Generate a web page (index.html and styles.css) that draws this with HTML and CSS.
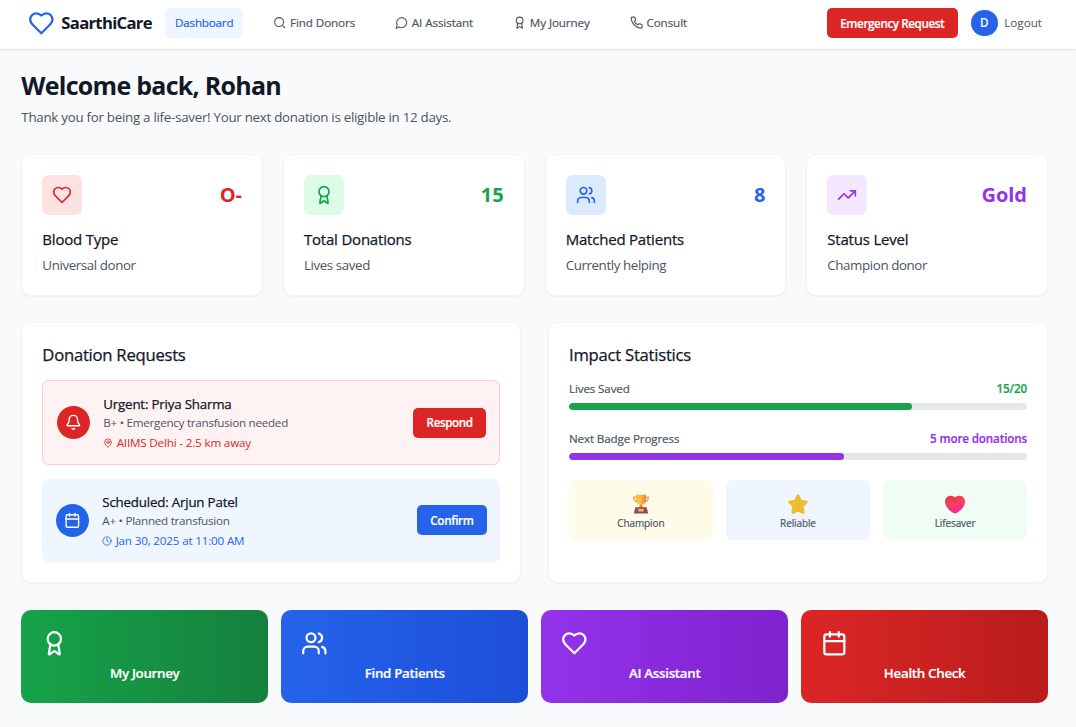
FILE: index.html
```html
<!DOCTYPE html>
<html lang="en">
<head>
    <meta charset="UTF-8">
    <meta name="viewport" content="width=device-width, initial-scale=1.0">
    <title>SaarthiCare</title>
    <link rel="stylesheet" href="styles.css">
</head>
<body>
    <!-- Shared icons -->
    <svg class="sprite" aria-hidden="true">
        <symbol id="heart" viewBox="0 0 24 24"><path d="M19 14c1.49-1.46 3-3.21 3-5.5A5.5 5.5 0 0 0 16.5 3c-1.76 0-3 .5-4.5 2-1.5-1.5-2.74-2-4.5-2A5.5 5.5 0 0 0 2 8.5c0 2.3 1.5 4.05 3 5.5l7 7Z"/></symbol>
        <symbol id="search" viewBox="0 0 24 24"><circle cx="11" cy="11" r="8"/><path d="m21 21-4.3-4.3"/></symbol>
        <symbol id="chat" viewBox="0 0 24 24"><path d="M7.9 20A9 9 0 1 0 4 16.1L2 22Z"/></symbol>
        <symbol id="award" viewBox="0 0 24 24"><path d="m15.477 12.89 1.515 8.526a.5.5 0 0 1-.81.47l-3.58-2.687a1 1 0 0 0-1.197 0l-3.586 2.686a.5.5 0 0 1-.81-.469l1.514-8.526"/><circle cx="12" cy="8" r="6"/></symbol>
        <symbol id="phone" viewBox="0 0 24 24"><path d="M22 16.92v3a2 2 0 0 1-2.18 2 19.79 19.79 0 0 1-8.63-3.07 19.5 19.5 0 0 1-6-6 19.79 19.79 0 0 1-3.07-8.67A2 2 0 0 1 4.11 2h3a2 2 0 0 1 2 1.72 12.84 12.84 0 0 0 .7 2.81 2 2 0 0 1-.45 2.11L8.09 9.91a16 16 0 0 0 6 6l1.27-1.27a2 2 0 0 1 2.11-.45 12.84 12.84 0 0 0 2.81.7A2 2 0 0 1 22 16.92z"/></symbol>
        <symbol id="users" viewBox="0 0 24 24"><path d="M16 21v-2a4 4 0 0 0-4-4H6a4 4 0 0 0-4 4v2"/><circle cx="9" cy="7" r="4"/><path d="M22 21v-2a4 4 0 0 0-3-3.87"/><path d="M16 3.13a4 4 0 0 1 0 7.75"/></symbol>
        <symbol id="trend" viewBox="0 0 24 24"><path d="M22 7 13.5 15.5 8.5 10.5 2 17"/><path d="M16 7h6v6"/></symbol>
        <symbol id="bell" viewBox="0 0 24 24"><path d="M10.268 21a2 2 0 0 0 3.464 0"/><path d="M3.262 15.326A1 1 0 0 0 4 17h16a1 1 0 0 0 .74-1.673C19.41 13.956 18 12.499 18 8A6 6 0 0 0 6 8c0 4.499-1.411 5.956-2.738 7.326"/></symbol>
        <symbol id="pin" viewBox="0 0 24 24"><path d="M20 10c0 4.993-5.539 10.193-7.399 11.799a1 1 0 0 1-1.202 0C9.539 20.193 4 14.993 4 10a8 8 0 0 1 16 0"/><circle cx="12" cy="10" r="3"/></symbol>
        <symbol id="calendar" viewBox="0 0 24 24"><path d="M8 2v4M16 2v4M3 10h18"/><rect x="3" y="4" width="18" height="18" rx="2"/></symbol>
        <symbol id="clock" viewBox="0 0 24 24"><circle cx="12" cy="12" r="10"/><path d="M12 6v6l4 2"/></symbol>
    </svg>

    <header class="header">
        <a class="brand" href="#">
            <svg class="icon icon-lg"><use href="#heart"/></svg>
            <span>SaarthiCare</span>
        </a>
        <nav class="nav">
            <a class="nav-link active" href="#">Dashboard</a>
            <a class="nav-link" href="#"><svg class="icon icon-sm"><use href="#search"/></svg>Find Donors</a>
            <a class="nav-link" href="#"><svg class="icon icon-sm"><use href="#chat"/></svg>AI Assistant</a>
            <a class="nav-link" href="#"><svg class="icon icon-sm"><use href="#award"/></svg>My Journey</a>
            <a class="nav-link" href="#"><svg class="icon icon-sm"><use href="#phone"/></svg>Consult</a>
        </nav>
        <div class="account">
            <button class="btn btn-red">Emergency Request</button>
            <div class="avatar">D</div>
            <a class="logout" href="#">Logout</a>
        </div>
    </header>

    <main class="main">
        <h1>Welcome back, Rohan</h1>
        <p class="subtitle">Thank you for being a life-saver! Your next donation is eligible in 12 days.</p>

        <!-- Stats -->
        <section class="stats">
            <div class="card red">
                <div class="stat-top">
                    <div class="stat-icon"><svg class="icon"><use href="#heart"/></svg></div>
                    <span class="stat-value">O-</span>
                </div>
                <h3>Blood Type</h3>
                <p>Universal donor</p>
            </div>
            <div class="card green">
                <div class="stat-top">
                    <div class="stat-icon"><svg class="icon"><use href="#award"/></svg></div>
                    <span class="stat-value">15</span>
                </div>
                <h3>Total Donations</h3>
                <p>Lives saved</p>
            </div>
            <div class="card blue">
                <div class="stat-top">
                    <div class="stat-icon"><svg class="icon"><use href="#users"/></svg></div>
                    <span class="stat-value">8</span>
                </div>
                <h3>Matched Patients</h3>
                <p>Currently helping</p>
            </div>
            <div class="card purple">
                <div class="stat-top">
                    <div class="stat-icon"><svg class="icon"><use href="#trend"/></svg></div>
                    <span class="stat-value">Gold</span>
                </div>
                <h3>Status Level</h3>
                <p>Champion donor</p>
            </div>
        </section>

        <section class="panels">
            <!-- Donation requests -->
            <div class="card">
                <h2>Donation Requests</h2>
                <div class="request urgent">
                    <div class="request-icon"><svg class="icon"><use href="#bell"/></svg></div>
                    <div class="request-text">
                        <h4>Urgent: Priya Sharma</h4>
                        <p>B+ • Emergency transfusion needed</p>
                        <p class="request-meta"><svg class="icon icon-xs"><use href="#pin"/></svg>AIIMS Delhi - 2.5 km away</p>
                    </div>
                    <button class="btn btn-red">Respond</button>
                </div>
                <div class="request scheduled">
                    <div class="request-icon"><svg class="icon"><use href="#calendar"/></svg></div>
                    <div class="request-text">
                        <h4>Scheduled: Arjun Patel</h4>
                        <p>A+ • Planned transfusion</p>
                        <p class="request-meta"><svg class="icon icon-xs"><use href="#clock"/></svg>Jan 30, 2025 at 11:00 AM</p>
                    </div>
                    <button class="btn btn-blue">Confirm</button>
                </div>
            </div>

            <!-- Impact -->
            <div class="card">
                <h2>Impact Statistics</h2>
                <div class="progress green">
                    <div class="progress-label"><span>Lives Saved</span><b>15/20</b></div>
                    <div class="track"><div class="fill" style="width: 75%"></div></div>
                </div>
                <div class="progress purple">
                    <div class="progress-label"><span>Next Badge Progress</span><b>5 more donations</b></div>
                    <div class="track"><div class="fill" style="width: 60%"></div></div>
                </div>
                <div class="badges">
                    <div class="badge badge-yellow">
                        <svg class="emoji" viewBox="0 0 32 32">
                            <defs><linearGradient id="cup" x2="1"><stop offset="0" stop-color="#f9b53c"/><stop offset=".4" stop-color="#ffc542"/><stop offset="1" stop-color="#ee7c3b"/></linearGradient></defs>
                            <path d="M9 5H4.500q-.8 7 7 8M23 5h4.500q.8 7-7 8" fill="none" stroke="#f49b3c" stroke-width="2.200"/>
                            <path d="M14 15h4l.5 7h-5z" fill="#e8803a"/>
                            <path d="M8 1h16v7c0 6-3 9-8 9s-8-3-8-9z" fill="url(#cup)"/>
                            <path d="M7 21h18l2.500 10h-23z" fill="#8b4860"/>
                            <path d="M8 21h16v3H8z" fill="#a65b68"/>
                            <rect x="11.500" y="24" width="9" height="4" rx="1" fill="#f6b64c"/>
                        </svg>
                        <span>Champion</span>
                    </div>
                    <div class="badge badge-blue">
                        <svg class="emoji" viewBox="0 0 32 32">
                            <defs><linearGradient id="gold" x2="1" y2="1"><stop offset="0" stop-color="#f6cf4a"/><stop offset=".6" stop-color="#e9bb2c"/><stop offset="1" stop-color="#f2d027"/></linearGradient></defs>
                            <path d="M16 3 19.500 11.500l9.500 1.200-6.500 6.600 1.500 10L16 25.200 8 29.300l1.500-10-6.500-6.600L12.500 11.500z" fill="url(#gold)" stroke="#edbd30" stroke-width="5" stroke-linejoin="round"/>
                        </svg>
                        <span>Reliable</span>
                    </div>
                    <div class="badge badge-green">
                        <svg class="emoji" viewBox="0 0 32 32">
                            <defs><linearGradient id="love" x2=".3" y2="1"><stop offset="0" stop-color="#e03a50"/><stop offset=".45" stop-color="#f8404f"/><stop offset="1" stop-color="#f529a0"/></linearGradient></defs>
                            <path d="M16 6C13 1 0 1.500 0 12.500 0 21 9 28 13.500 30.500q2.500 1 5 0C23 28 32 21 32 12.500 32 1.500 19 1 16 6z" fill="url(#love)"/>
                            <path d="M16 6c-1.500 2-1.500 4-.5 6" fill="none" stroke="#c92d4c" stroke-width="1.500"/>
                        </svg>
                        <span>Lifesaver</span>
                    </div>
                </div>
            </div>
        </section>

        <!-- Quick actions -->
        <section class="actions">
            <a class="action action-green" href="#"><svg class="icon icon-lg"><use href="#award"/></svg><span>My Journey</span></a>
            <a class="action action-blue" href="#"><svg class="icon icon-lg"><use href="#users"/></svg><span>Find Patients</span></a>
            <a class="action action-purple" href="#"><svg class="icon icon-lg"><use href="#heart"/></svg><span>AI Assistant</span></a>
            <a class="action action-red" href="#"><svg class="icon icon-lg"><use href="#calendar"/></svg><span>Health Check</span></a>
        </section>
    </main>
</body>
</html>
```

FILE: styles.css
```css
:root {
    --red: #dc2626;
    --green: #16a34a;
    --blue: #2563eb;
    --purple: #9333ea;
    --heading: #111827;
    --text: #4b5563;
}

* {
    box-sizing: border-box;
}

html {
    font-size: 13.333px;
}

body {
    margin: 0;
    height: 100vh;
    overflow: hidden;
    background-color: #f9fafb;
    color: var(--heading);
    font-family: 'Open Sans', 'Noto Sans', sans-serif;
    font-size: 1rem;
    line-height: 1.5;
}

h1, h2, h3, h4, p {
    margin: 0;
}

/* Open Sans has no medium weight, thicken the regular one */
h2, h3, h4 {
    font-weight: 400;
    -webkit-text-stroke: 0.25px currentColor;
}

a {
    color: inherit;
    text-decoration: none;
}

.sprite {
    position: absolute;
    width: 0;
    height: 0;
}

.icon {
    width: 1.5rem;
    height: 1.5rem;
    flex-shrink: 0;
    fill: none;
    stroke: currentColor;
    stroke-width: 2;
    stroke-linecap: round;
    stroke-linejoin: round;
}

.icon-lg {
    width: 2rem;
    height: 2rem;
}

.icon-sm {
    width: 1rem;
    height: 1rem;
}

.icon-xs {
    width: 0.75rem;
    height: 0.75rem;
}

/* Header */
.header {
    display: flex;
    align-items: center;
    height: 50px;
    padding: 0 34px 3px 28px;
    background-color: #fff;
    border-bottom: 1px solid #e5e7eb;
    box-shadow: 0 1px 2px rgba(0, 0, 0, 0.05);
}

.brand {
    display: flex;
    align-items: center;
    gap: 6.667px;
    width: 137px;
    font-size: 1.25rem;
    font-weight: 700;
    line-height: 23.333px;
    letter-spacing: -0.7px;
}

.brand .icon {
    color: var(--blue);
}

.nav {
    display: flex;
    gap: 20px;
}

.nav-link {
    display: flex;
    align-items: center;
    gap: 3.333px;
    height: 30px;
    padding: 0 10px;
    border-radius: 5px;
    color: var(--text);
    font-size: 0.875rem;
    letter-spacing: -0.1px;
    white-space: nowrap;
    -webkit-text-stroke: 0.2px currentColor;
}

.nav-link.active {
    background-color: #eff6ff;
    color: var(--blue);
    letter-spacing: -0.2px;
}

.account {
    display: flex;
    align-items: center;
    margin-left: auto;
}

.btn {
    height: 30px;
    padding: 0 13.333px;
    border: none;
    border-radius: 5px;
    color: #fff;
    font-family: inherit;
    font-size: 0.875rem;
    font-weight: 600;
    letter-spacing: -0.4px;
    white-space: nowrap;
    cursor: pointer;
    -webkit-text-stroke: 0.2px currentColor;
}

.btn-red {
    background-color: var(--red);
}

.btn-blue {
    background-color: var(--blue);
    letter-spacing: -0.3px;
}

.avatar {
    display: flex;
    align-items: center;
    justify-content: center;
    width: 2rem;
    height: 2rem;
    margin: 0 6.667px 0 13.333px;
    border-radius: 50%;
    background-color: var(--blue);
    color: #fff;
    font-size: 0.875rem;
    font-weight: 600;
}

.logout {
    color: var(--text);
    font-size: 0.875rem;
}

/* Main */
.main {
    padding: 20px 28px 0 21.333px;
}

h1 {
    font-size: 1.875rem;
    font-weight: 700;
    line-height: 30px;
    letter-spacing: -0.72px;
}

h2 {
    margin-bottom: 13.333px;
    font-size: 1.25rem;
    line-height: 23.333px;
    letter-spacing: -0.25px;
}

.subtitle {
    margin: 8px 0 25.833px;
    color: var(--text);
    letter-spacing: -0.27px;
}

.card {
    padding: 20px;
    border: 1px solid #f3f4f6;
    border-radius: 10px;
    background-color: #fff;
    box-shadow: 0 1px 2px rgba(0, 0, 0, 0.05);
}

/* Stats */
.stats {
    display: grid;
    grid-template-columns: repeat(4, 1fr);
    gap: 20px;
    margin-bottom: 26.667px;
}

.stats .card {
    padding-bottom: 19px;
}

.stat-top {
    display: flex;
    align-items: center;
    justify-content: space-between;
    margin-bottom: 13.333px;
}

.stat-icon {
    display: flex;
    align-items: center;
    justify-content: center;
    width: 3rem;
    height: 3rem;
    border-radius: 6.667px;
}

.stat-value {
    font-size: 1.5rem;
    font-weight: 700;
}

.stats h3 {
    font-size: 1.125rem;
    line-height: 23.333px;
    letter-spacing: -0.2px;
}

.stats p {
    margin-top: 4.333px;
    color: var(--text);
    letter-spacing: -0.4px;
}

.red .stat-icon {
    background-color: #fee2e2;
}

.green .stat-icon {
    background-color: #dcfce7;
}

.blue .stat-icon {
    background-color: #dbeafe;
}

.purple .stat-icon {
    background-color: #f3e8ff;
}

.red .stat-top {
    color: var(--red);
}

.green .stat-top,
.green b {
    color: var(--green);
}

.blue .stat-top {
    color: var(--blue);
}

.purple .stat-top,
.purple b {
    color: var(--purple);
}

/* Panels */
.panels {
    display: grid;
    grid-template-columns: repeat(2, 1fr);
    gap: 26.667px;
    margin-bottom: 26.667px;
}

.request {
    display: flex;
    align-items: center;
    gap: 13.333px;
    padding: 13.333px;
    border-radius: 6.667px;
    color: var(--text);
    font-size: 0.875rem;
    line-height: 16.667px;
    letter-spacing: -0.27px;
}

.urgent {
    margin-bottom: 13.333px;
    border: 1px solid #fecaca;
    background-color: #fef2f2;
}

.scheduled {
    background-color: #eff6ff;
}

.request-icon {
    display: flex;
    align-items: center;
    justify-content: center;
    width: 2.5rem;
    height: 2.5rem;
    border-radius: 50%;
    background-color: var(--red);
    color: #fff;
}

.request-icon .icon {
    width: 1.25rem;
    height: 1.25rem;
}

.scheduled .request-icon {
    background-color: var(--blue);
}

.request-text {
    flex: 1;
}

.request h4 {
    margin-bottom: 1px;
    color: var(--heading);
    font-size: 1rem;
    line-height: 20px;
    letter-spacing: -0.2px;
}

.request-meta {
    display: flex;
    align-items: center;
    gap: 3.333px;
    margin: 3.333px 0 -1px;
    color: var(--red);
    letter-spacing: -0.18px;
}

.request-meta .icon {
    margin-top: -1px;
}

.scheduled .request-meta {
    color: var(--blue);
}

/* Progress bars */
.progress {
    margin-bottom: 20px;
}

.progress-label {
    display: flex;
    justify-content: space-between;
    padding-top: 1px;
    margin-bottom: 5.667px;
    color: var(--text);
    font-size: 0.875rem;
    line-height: 16.667px;
    letter-spacing: -0.15px;
    -webkit-text-stroke: 0.2px currentColor;
}

.progress-label b {
    font-weight: 600;
}

.track {
    height: 6.667px;
    border-radius: 4px;
    background-color: #e5e7eb;
    overflow: hidden;
}

.fill {
    height: 100%;
    border-radius: 4px;
    background-color: var(--green);
}

.purple .fill {
    background-color: var(--purple);
}

.badges {
    display: grid;
    grid-template-columns: repeat(3, 1fr);
    gap: 13.333px;
}

.badge {
    display: flex;
    flex-direction: column;
    align-items: center;
    height: 60px;
    padding-top: 13.667px;
    border-radius: 6.667px;
    color: var(--text);
    font-size: 0.75rem;
    line-height: 13.333px;
    letter-spacing: -0.1px;
    -webkit-text-stroke: 0.2px currentColor;
}

.badge-yellow {
    background-color: #fefce8;
}

.badge-blue {
    background-color: #eff6ff;
}

.badge-green {
    background-color: #f0fdf4;
}

.emoji {
    width: 20px;
    height: 20px;
    margin-bottom: 3px;
}

/* Quick actions */
.actions {
    display: grid;
    grid-template-columns: repeat(4, 1fr);
    gap: 13.333px;
}

.action {
    display: flex;
    flex-direction: column;
    gap: 6.667px;
    padding: 20px;
    border-radius: 10px;
    color: #fff;
    font-weight: 600;
    line-height: 20px;
    letter-spacing: -0.3px;
}

.action span {
    text-align: center;
    -webkit-text-stroke: 0.2px currentColor;
}

.action-green {
    background: linear-gradient(to right, #16a34a, #15803d);
}

.action-blue {
    background: linear-gradient(to right, #2563eb, #1d4ed8);
}

.action-purple {
    background: linear-gradient(to right, #9333ea, #7e22ce);
}

.action-red {
    background: linear-gradient(to right, #dc2626, #b91c1c);
}
```
